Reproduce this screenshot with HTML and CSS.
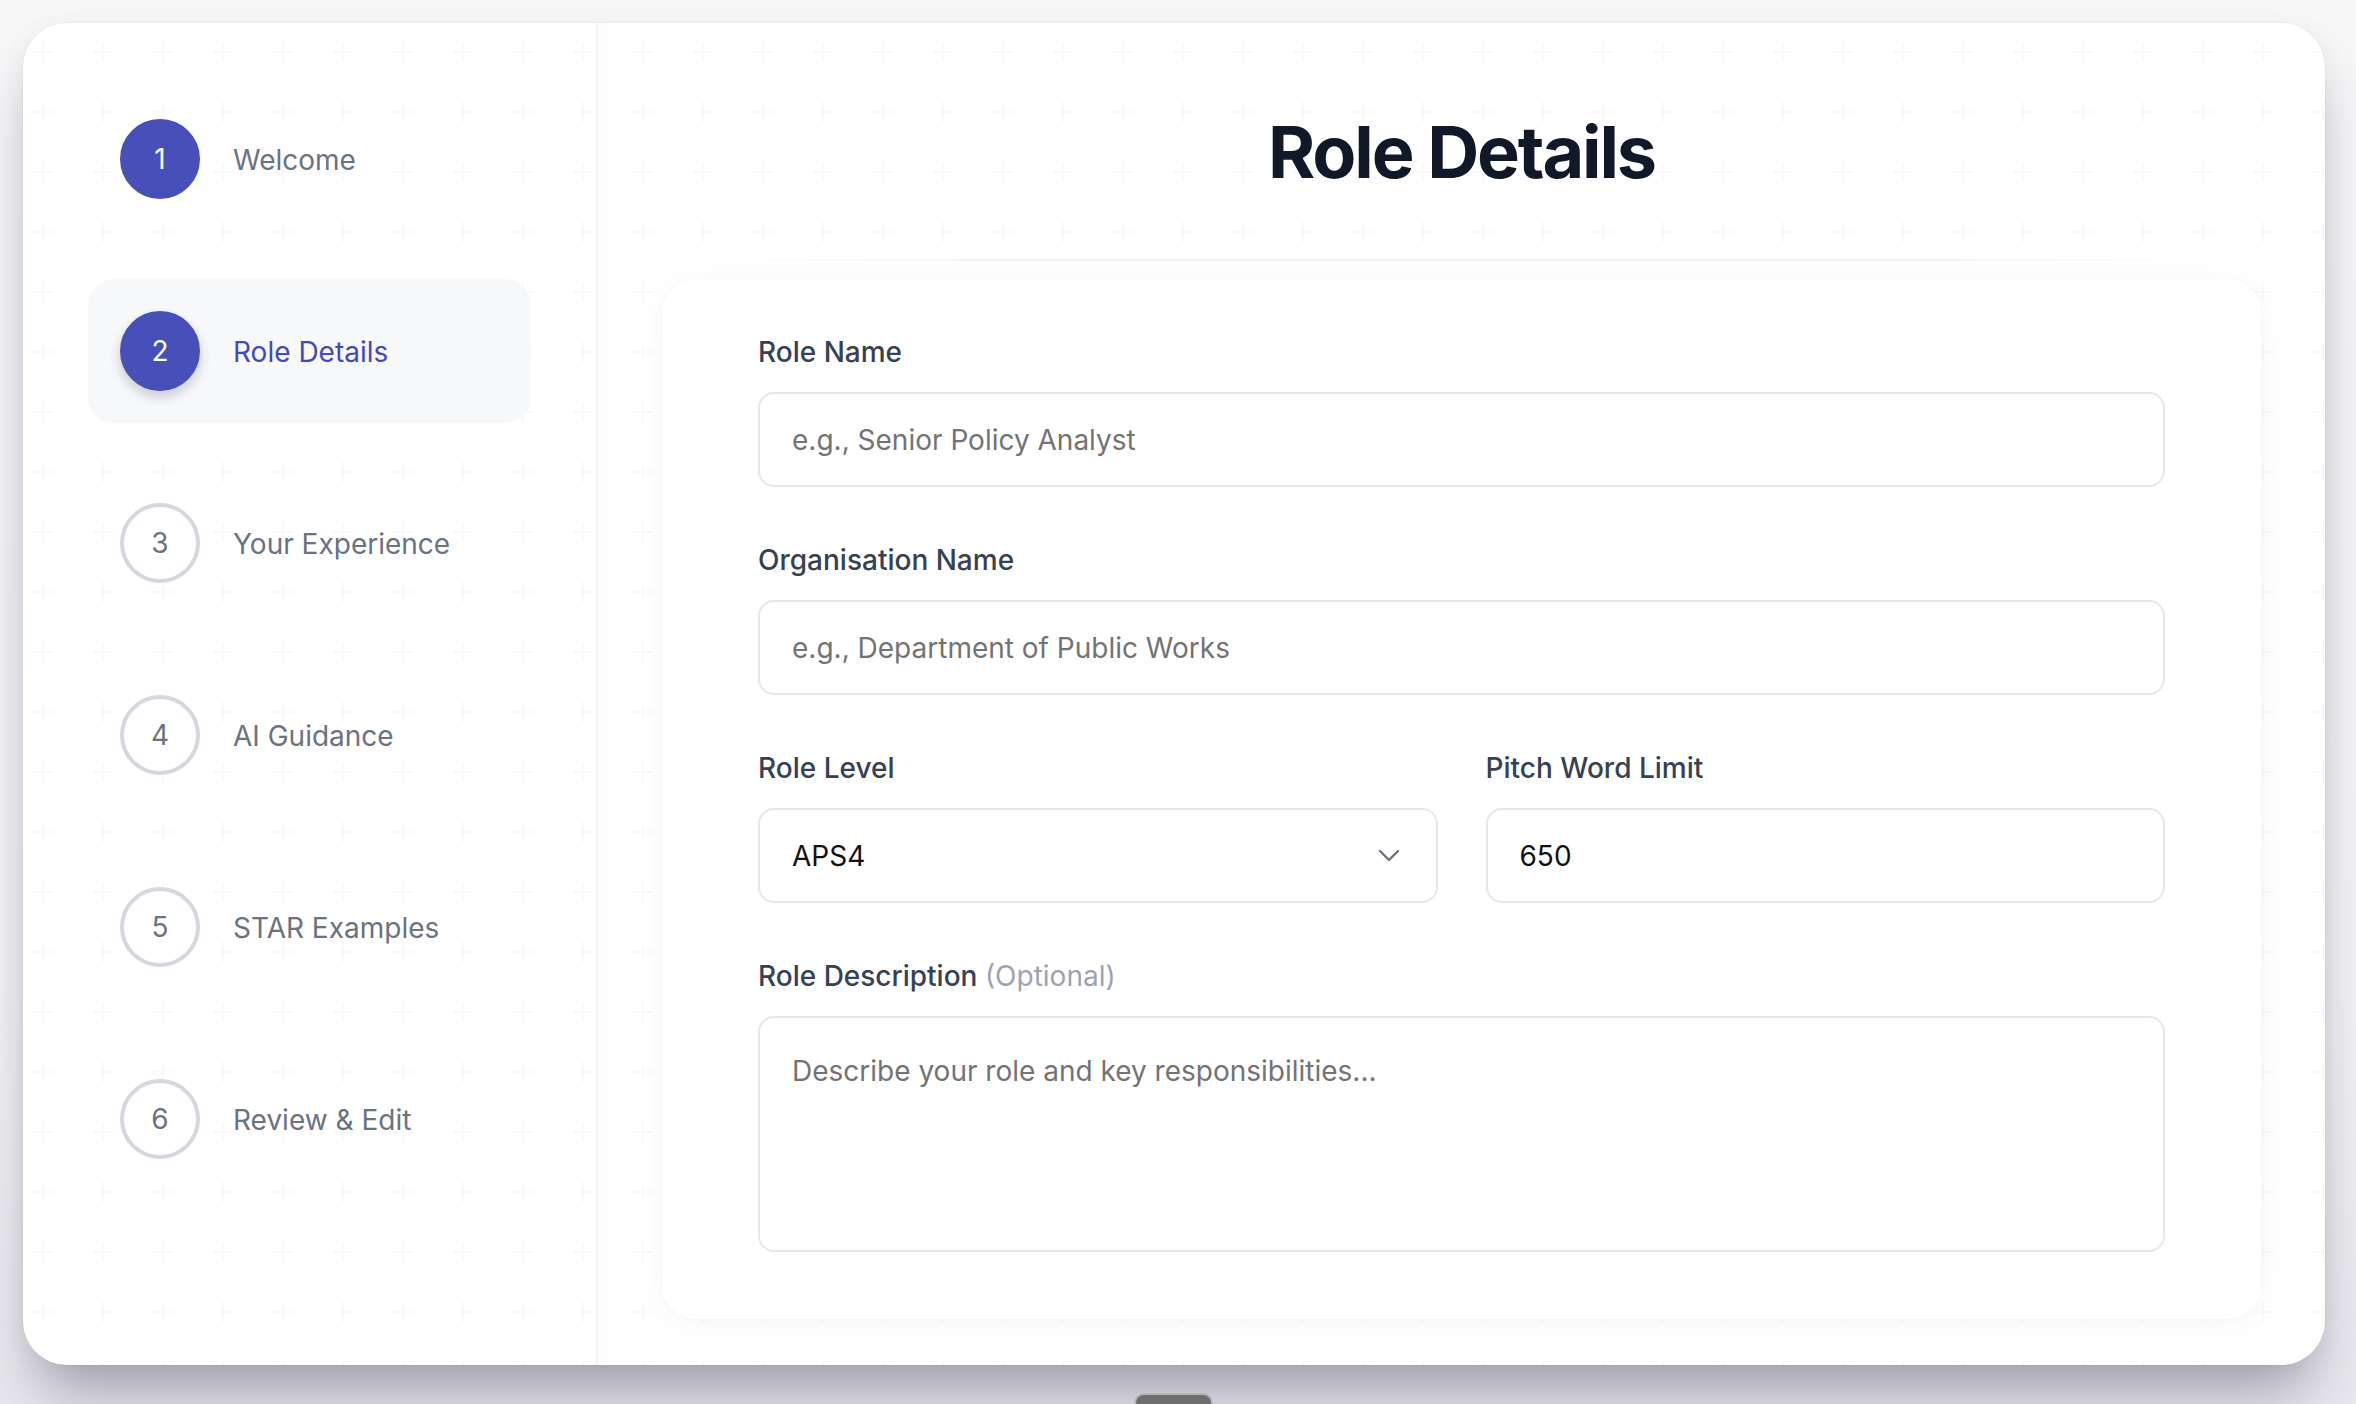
FILE: index.html
```html
<!DOCTYPE html>
<html lang="en">
<head>
<meta charset="utf-8">
<title>Role Details</title>
<link rel="stylesheet" href="styles.css">
</head>
<body>
<div class="app">
  <aside class="sidebar">
    <div class="step done">
      <span class="circle filled">1</span>
      <span class="step-label">Welcome</span>
    </div>
    <div class="step active">
      <span class="circle filled raised">2</span>
      <span class="step-label">Role Details</span>
    </div>
    <div class="step">
      <span class="circle">3</span>
      <span class="step-label">Your Experience</span>
    </div>
    <div class="step">
      <span class="circle">4</span>
      <span class="step-label">AI Guidance</span>
    </div>
    <div class="step">
      <span class="circle">5</span>
      <span class="step-label">STAR Examples</span>
    </div>
    <div class="step">
      <span class="circle">6</span>
      <span class="step-label">Review &amp; Edit</span>
    </div>
  </aside>
  <main class="main">
    <header class="title-wrap">
      <h1 class="title">Role Details</h1>
      <div class="rule"></div>
    </header>
    <section class="form-card">
      <div class="field">
        <label class="label">Role Name</label>
        <input class="input" type="text" placeholder="e.g., Senior Policy Analyst">
      </div>
      <div class="field">
        <label class="label">Organisation Name</label>
        <input class="input" type="text" placeholder="e.g., Department of Public Works">
      </div>
      <div class="field row">
        <div class="col">
          <label class="label">Role Level</label>
          <div class="input select">
            <span class="value">APS4</span>
            <svg class="chevron" width="22" height="13" viewBox="0 0 22 13"><path d="M2 2l9 9 9-9" fill="none" stroke="#6b7280" stroke-width="2.4" stroke-linecap="round" stroke-linejoin="round"/></svg>
          </div>
        </div>
        <div class="col">
          <label class="label">Pitch Word Limit</label>
          <input class="input" type="text" value="650">
        </div>
      </div>
      <div class="field">
        <label class="label">Role Description <span class="optional">(Optional)</span></label>
        <textarea class="input textarea" placeholder="Describe your role and key responsibilities..."></textarea>
      </div>
    </section>
  </main>
</div>
<div class="handle"></div>
</body>
</html>
```

FILE: styles.css
```css
html, body {
  margin: 0;
  padding: 0;
}

body {
  width: 2356px;
  height: 1404px;
  box-sizing: border-box;
  padding: 23px 0 0 23px;
  background: linear-gradient(180deg, #f7f7f8 0%, #f4f4f6 70%, #e9e8ed 100%);
  font-family: "Inter", "Noto Sans", sans-serif;
  overflow: hidden;
  position: relative;
}

.app {
  width: 2302px;
  height: 1342px;
  display: flex;
  border-radius: 44px;
  overflow: hidden;
  background-color: #ffffff;
  background-image: url("data:image/svg+xml,%3Csvg xmlns='http://www.w3.org/2000/svg' width='60' height='60'%3E%3Cpath d='M30 20v20M20 30h20' stroke='%23f9f9fa' stroke-width='2'/%3E%3C/svg%3E");
  background-position: -10px -1px;
  background-size: 60px 60px;
  box-shadow: 0 0 0 1px rgba(0, 0, 0, 0.025), 0 40px 60px -14px rgba(45, 38, 70, 0.38), 0 4px 30px rgba(0, 0, 0, 0.04);
}

/* ---------- Sidebar ---------- */
.sidebar {
  flex: 0 0 575px;
  box-sizing: border-box;
  padding: 64px 65px;
  display: flex;
  flex-direction: column;
  gap: 48px;
  border-right: 2px solid #f3f4f6;
  box-shadow: 6px 0 22px rgba(0, 0, 0, 0.025);
  position: relative;
  z-index: 1;
}

.step {
  height: 144px;
  box-sizing: border-box;
  padding: 0 32px;
  display: flex;
  align-items: center;
  gap: 33px;
  border-radius: 26px;
}

.step.active {
  background: rgba(246, 247, 250, 0.92);
}

.circle {
  width: 80px;
  height: 80px;
  flex: 0 0 80px;
  box-sizing: border-box;
  border-radius: 50%;
  border: 4px solid #d4d7dd;
  background: #ffffff;
  color: #6b7280;
  font-size: 28px;
  display: flex;
  align-items: center;
  justify-content: center;
}

.circle.filled {
  background: #4750b8;
  border-color: #4750b8;
  color: #ffffff;
}

.circle.raised {
  box-shadow: 0 6px 12px rgba(40, 40, 90, 0.22);
}

.step-label {
  font-size: 28px;
  color: #6b7280;
  line-height: 40px;
  padding-top: 2px;
}

.step.active .step-label {
  color: #4249b9;
}

/* ---------- Main ---------- */
.main {
  flex: 1;
  box-sizing: border-box;
  padding: 89px 64px 0 64px;
  display: flex;
  flex-direction: column;
}

.title-wrap {
  display: flex;
  flex-direction: column;
}

.title {
  margin: 0;
  font-size: 72px;
  line-height: 80px;
  font-weight: 700;
  letter-spacing: -0.03em;
  color: #111827;
  text-align: center;
}

.rule {
  height: 2px;
  margin: 67px 60px 0;
  background: linear-gradient(90deg, rgba(238, 240, 243, 0) 0%, #f0f1f3 20%, #f0f1f3 80%, rgba(238, 240, 243, 0) 100%);
}

.form-card {
  margin-top: 18px;
  box-sizing: border-box;
  height: 1040px;
  padding: 53px 96px 67px;
  background: #ffffff;
  border-radius: 34px;
  box-shadow: 0 0 0 1px rgba(0, 0, 0, 0.012), 0 4px 28px rgba(0, 0, 0, 0.045);
  display: flex;
  flex-direction: column;
  gap: 53px;
}

.field {
  display: flex;
  flex-direction: column;
}

.field.row {
  display: grid;
  grid-template-columns: 1fr 1fr;
  gap: 48px;
}

.col {
  display: flex;
  flex-direction: column;
}

.label {
  display: block;
  font-size: 28px;
  line-height: 40px;
  font-weight: 500;
  color: #374151;
  margin-bottom: 20px;
}

.optional {
  font-weight: 400;
  color: #9ca3af;
}

.input {
  box-sizing: border-box;
  width: 100%;
  height: 95px;
  border: 2px solid #e5e7eb;
  border-radius: 16px;
  padding: 0 32px;
  font-family: "Inter", "Noto Sans", sans-serif;
  font-size: 28px;
  color: #111111;
  background: #ffffff;
  outline: none;
}

.input::placeholder {
  color: #737373;
  opacity: 1;
}

.select {
  display: flex;
  align-items: center;
  justify-content: space-between;
  padding-right: 36px;
}

.select .value {
  color: #111111;
}

.textarea {
  height: 236px;
  padding: 32px 32px;
  line-height: 42px;
  resize: none;
  display: block;
}

.handle {
  position: absolute;
  left: 1134px;
  top: 1393px;
  width: 79px;
  height: 24px;
  box-sizing: border-box;
  background: #6e6e6e;
  border: 2px solid #b4b4b6;
  border-radius: 10px;
}
```
